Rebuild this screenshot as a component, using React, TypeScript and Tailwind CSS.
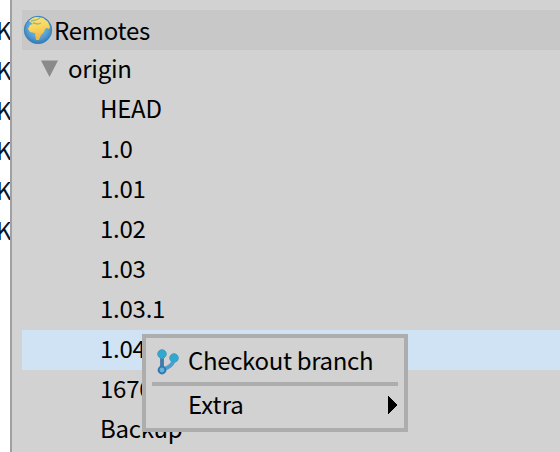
const branches = ['HEAD', '1.0', '1.01', '1.02', '1.03', '1.03.1', '1.04', '1670', 'Backup'];

function Globe() {
  return (
    <svg width="30" height="30" viewBox="0 0 30 30" className="shrink-0">
      <defs>
        <radialGradient id="sea" cx="0.5" cy="0.4" r="0.6">
          <stop offset="0" stopColor="#8fc5e6" />
          <stop offset="0.65" stopColor="#58a0d2" />
          <stop offset="1" stopColor="#3078b4" />
        </radialGradient>
        <linearGradient id="land" x1="0" y1="0" x2="0.2" y2="1">
          <stop offset="0" stopColor="#f3e585" />
          <stop offset="0.5" stopColor="#fbd65b" />
          <stop offset="1" stopColor="#edb64c" />
        </linearGradient>
      </defs>
      <circle cx="15" cy="15" r="13.7" fill="url(#sea)" stroke="#3c82b9" strokeWidth="1" />
      <path d="M6 6 Q10 2 14 2 L20 3 L25 7 L27 12 L26 14 L24 13 L22 14 L21 17 L18 20 L16 25 L13 25 L12 18 L7 17 L5 14 L7 10 L10 9 Z" fill="url(#land)" />
      <path d="M8 6 L13 5 L17 3 M10 8 L15 9 L18 8" fill="none" stroke="#9fb67c" strokeWidth="1.3" />
    </svg>
  );
}

function BranchIcon() {
  return (
    <svg width="24" height="28" viewBox="0 0 24 28" className="mt-1 shrink-0">
      <path d="M6 7 V20" stroke="#4279ad" strokeWidth="3.8" />
      <path d="M18 10 C18 16 12 20 6 22" fill="none" stroke="#4f9dcb" strokeWidth="3.8" />
      <circle cx="6" cy="6" r="4.3" fill="#2faacf" stroke="#4b9bc3" strokeWidth="1" />
      <circle cx="18" cy="10" r="4.3" fill="#2faacf" stroke="#4b9bc3" strokeWidth="1" />
      <circle cx="6" cy="22" r="3.4" fill="#65b5d9" stroke="#3278b2" strokeWidth="2" />
    </svg>
  );
}

export default function App() {
  return (
    <div className="relative flex h-[452px] w-[560px] overflow-hidden bg-[#d2d2d2] font-['Noto_Sans_CJK_SC',sans-serif] text-[24px] leading-10 tracking-[-0.25px] text-black">
      <div className="flex w-[10px] shrink-0 flex-col overflow-hidden bg-white pt-[10px]">
        {[0, 1, 2, 3, 4, 5].map((n) => (
          <div key={n} className="-ml-[4px] h-10 text-[#061535]">K</div>
        ))}
      </div>
      <div className="w-[2px] shrink-0 bg-[#a0a0a0]" />
      <div className="flex min-w-0 flex-1 flex-col pt-[10px] pl-[10px]">
        <div className="flex h-10 shrink-0 items-center bg-[#c8c8c8] pl-px">
          <Globe />
          <span className="-mt-px ml-px h-10">Remotes</span>
        </div>
        <div className="flex h-10 shrink-0 pl-[19px]">
          <svg width="17" height="18" viewBox="0 0 17 18" className="mt-[10px]">
            <path d="M0 0.5 H17 L8.5 17 Z" fill="#8a8a8a" />
          </svg>
          <span className="-mt-[2px] ml-[10px]">origin</span>
        </div>
        {branches.map((b) => (
          <div key={b} className={`h-10 shrink-0 pl-[78px] ${b === '1.04' ? 'bg-[#cfe3f5]' : ''}`}>
            <div className="-translate-y-[2px]">{b}</div>
          </div>
        ))}
      </div>
      <div className="absolute top-[334px] left-[142px] flex h-[98px] w-[266px] flex-col border-4 border-[#adadad] bg-[#d2d2d2] px-[6px]">
        <div className="flex h-11 shrink-0 items-center pl-[4px]">
          <BranchIcon />
          <span className="ml-[8px] h-10 tracking-[-0.33px]">Checkout branch</span>
        </div>
        <div className="h-1 shrink-0 bg-[#adadad]" />
        <div className="flex h-[38px] items-center justify-between pl-[36px]">
          <span className="-mt-[2px] h-10 tracking-normal">Extra</span>
          <svg width="10" height="18" viewBox="0 0 10 18" shapeRendering="crispEdges">
            <path d="M0 0 L10 9 L0 18 Z" />
          </svg>
        </div>
      </div>
    </div>
  );
}
